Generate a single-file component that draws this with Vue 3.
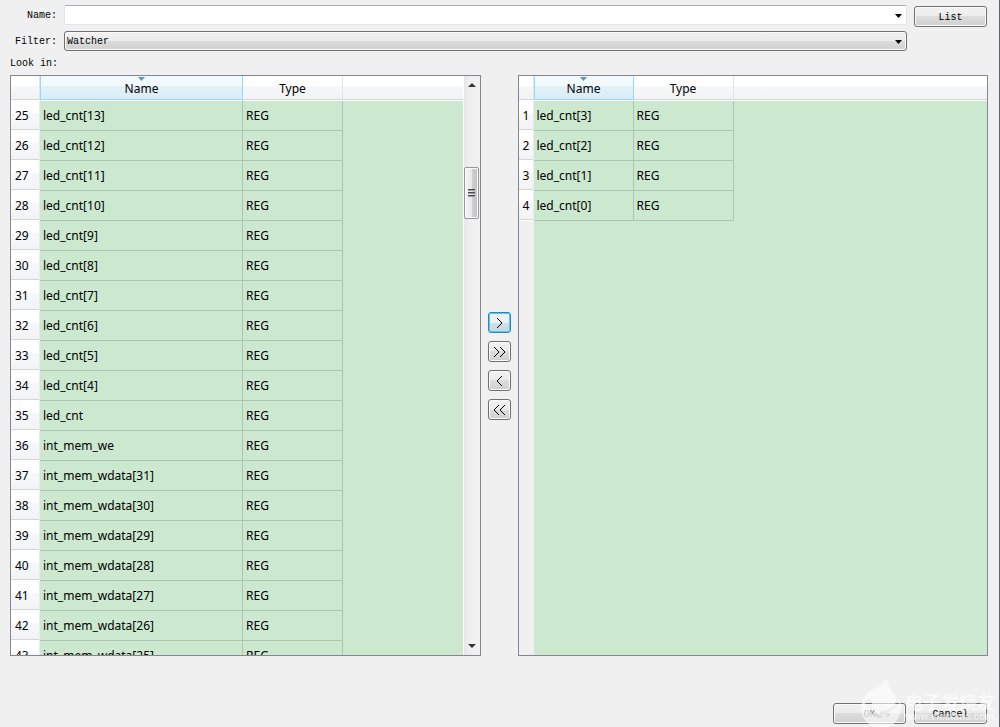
<script setup>
import { ref } from 'vue'

const name = ref('')
const filter = ref('Watcher')

const names = []
for (let i = 13; i >= 4; i--) names.push(`led_cnt[${i}]`)
names.push('led_cnt', 'int_mem_we')
for (let i = 31; i >= 25; i--) names.push(`int_mem_wdata[${i}]`)

const panes = [
  { id: 'available', first: 25, names, scroll: true },
  { id: 'selected', first: 1, names: [3, 2, 1, 0].map((i) => `led_cnt[${i}]`), scroll: false },
]

const moves = [
  { label: 'Add', d: 'M8 5l5 5l-5 5', active: true },
  { label: 'Add all', d: 'M5 5l5 5l-5 5M11 5l5 5l-5 5' },
  { label: 'Remove', d: 'M13 5l-5 5l5 5' },
  { label: 'Remove all', d: 'M10 5l-5 5l5 5M16 5l-5 5l5 5' },
]
</script>

<template>
  <main class="dialog">
    <form class="search" @submit.prevent>
      <label for="name">Name:</label>
      <div class="combo">
        <input id="name" v-model="name" type="text" />
        <svg class="arrow" viewBox="0 0 7 4"><path d="M0 0h7L3.5 4z" /></svg>
      </div>
      <button class="btn list" type="submit">List</button>
      <label for="filter">Filter:</label>
      <div class="combo">
        <select id="filter" v-model="filter">
          <option>Watcher</option>
        </select>
        <svg class="arrow" viewBox="0 0 7 4"><path d="M0 0h7L3.5 4z" /></svg>
      </div>
    </form>
    <p class="look">Look in:</p>

    <section class="lists">
      <template v-for="pane in panes" :key="pane.id">
        <div v-if="pane.id === 'selected'" class="moves">
          <button
            v-for="m in moves"
            :key="m.label"
            type="button"
            class="btn move"
            :class="{ active: m.active }"
            :aria-label="m.label"
          >
            <svg viewBox="0 0 21 19"><path :d="m.d" /></svg>
          </button>
        </div>
        <div class="pane" :class="pane.id">
          <div class="view">
            <table>
              <colgroup>
                <col class="c-num" />
                <col class="c-name" />
                <col class="c-type" />
                <col />
              </colgroup>
              <thead>
                <tr>
                  <td></td>
                  <th class="sorted" scope="col">
                    Name
                    <svg class="sort" viewBox="0 0 7 4"><path d="M0 0h7L3.5 4z" /></svg>
                  </th>
                  <th scope="col">Type</th>
                  <td></td>
                </tr>
              </thead>
              <tbody>
                <tr v-for="(n, i) in pane.names" :key="n">
                  <th scope="row">{{ pane.first + i }}</th>
                  <td>{{ n }}</td>
                  <td>REG</td>
                  <td class="rest"></td>
                </tr>
              </tbody>
            </table>
          </div>
          <div v-if="pane.scroll" class="scrollbar">
            <svg class="cap" viewBox="0 0 16 17"><path d="M4 11h8L8 7z" /></svg>
            <span class="before"></span>
            <div class="thumb"><i></i><i></i><i></i></div>
            <span class="after"></span>
            <svg class="cap" viewBox="0 0 16 17"><path d="M4 6h8L8 10z" /></svg>
          </div>
        </div>
      </template>
    </section>

    <footer class="actions">
      <button class="btn" type="button" disabled>OK</button>
      <button class="btn" type="button">Cancel</button>
    </footer>

    <div class="mark">
      <svg viewBox="0 0 44 50">
        <path
          fill-rule="evenodd"
          d="M27 1C29 8 32 12 34 16C38 20 38 25 35 29L27 34A3.500 3.500 0 1 0 28 36L38 30C41 27 40 23 38 19A20 20 0 1 1 8 17C13 11 25 10 27 1ZM13 27A3.500 3.500 0 1 0 11 29V34L19 41L31 39V36L20 38L13 32Z"
        />
      </svg>
      <div class="mark-text">
        <strong>电子发烧友</strong>
        <span>www.elecfans.com</span>
      </div>
    </div>
  </main>
</template>

<style>
body {
  margin: 0;
}
</style>

<style scoped>
.dialog {
  position: relative;
  box-sizing: border-box;
  display: flex;
  flex-direction: column;
  height: 100vh;
  padding: 5px 11px 3px 10px;
  border-right: 1px solid #59657a;
  background: #f0f0f0;
  color: #000;
  font: 10px/12px 'Liberation Mono', monospace;
  overflow: hidden;
}
.search {
  display: grid;
  grid-template-columns: 47px 1fr 73px;
  gap: 4px 7px;
  align-items: start;
  margin-right: 1px;
}
.search label {
  line-height: 22px;
  text-align: right;
}
.combo {
  position: relative;
  display: flex;
}
.combo input,
.combo select {
  box-sizing: border-box;
  width: 100%;
  height: 20px;
  margin: 0;
  padding: 2px 20px 0 2px;
  font: inherit;
  color: #000;
  appearance: none;
  outline: none;
}
.combo input {
  border: 1px solid #e2e3ea;
  border-top-color: #abadb3;
  border-radius: 2px;
  background: #fff;
}
.combo select,
.btn {
  border: 1px solid #707070;
  border-radius: 3px;
  background: linear-gradient(#f2f2f2 0, #ebebeb 50%, #dddddd 50%, #cfcfcf 100%);
  box-shadow: inset 0 0 0 1px #fafafa;
}
.arrow {
  position: absolute;
  right: 5px;
  top: 9px;
  width: 7px;
  height: 4px;
  pointer-events: none;
}
.btn {
  box-sizing: border-box;
  width: 73px;
  height: 21px;
  padding: 2px 0 0;
  font: inherit;
  color: #000;
}
.btn:disabled {
  color: #6f6f6f;
}
.list {
  margin-top: 1px;
}
.look {
  margin: 4px 0;
  line-height: 14px;
}
.lists {
  flex: 1;
  min-height: 0;
  display: flex;
}
.pane {
  flex: 1;
  min-width: 0;
  display: flex;
  border: 1px solid #828790;
  overflow: hidden;
}
.view {
  flex: 1;
  min-width: 0;
  overflow: hidden;
}
.available {
  --num: 29px;
  --name: 203px;
}
.selected {
  --num: 15px;
  --name: 100px;
}
.pane .view {
  background: linear-gradient(90deg, #f0f0f0 var(--num), #cce8cf var(--num));
}
table {
  width: 100%;
  table-layout: fixed;
  border-collapse: separate;
  border-spacing: 0;
  font: 12px/16px 'Noto Sans', sans-serif;
}
.c-num {
  width: var(--num);
}
.c-name {
  width: var(--name);
}
.c-type {
  width: 100px;
}
th,
td {
  box-sizing: border-box;
  padding: 0;
  font-weight: normal;
  white-space: nowrap;
}
thead th,
thead td {
  position: relative;
  height: 25px;
  border-bottom: 1px solid #fff;
  border-right: 1px solid #e2e4e6;
  background: linear-gradient(#fff 40%, #f5f7f9 40%, #f1f3f5);
  box-shadow: inset 0 -1px #d5d5d5;
}
thead th {
  padding-top: 2px;
}
thead td:last-child {
  border-right: 0;
}
thead .sorted {
  border-left: 1px solid #96d9f9;
  border-right-color: #96d9f9;
  background: linear-gradient(#f3fafd 40%, #e3f2f9 40%, #d8ecf6);
  box-shadow: inset 0 -1px #96d9f9;
}
.sort {
  position: absolute;
  left: 50%;
  top: 1px;
  width: 7px;
  height: 4px;
  margin-left: -4px;
  fill: #5a9ab8;
}
tbody th,
tbody td {
  height: 30px;
  overflow: hidden;
}
tbody th {
  padding-left: 4px;
  border-right: 1px solid #e9ecef;
  border-bottom: 1px solid #fff;
  background: linear-gradient(#fff 40%, #f7f8fa 40%, #f1f3f5);
  box-shadow: inset 0 -1px #d5d5d5;
  text-align: left;
}
tbody td {
  padding-left: 3px;
  border-right: 1px solid #acc5ae;
  border-bottom: 1px solid #acc5ae;
}
tbody .rest {
  border: 0;
}
.scrollbar {
  display: flex;
  flex-direction: column;
  width: 16px;
  border-left: 1px solid #fff;
  background: linear-gradient(90deg, #e6e6e6, #efefef 30%, #f1f1f1);
}
.cap {
  flex: none;
  width: 16px;
  height: 17px;
  fill: #333;
}
.before {
  flex: 74;
}
.after {
  flex: 419;
}
.thumb {
  box-sizing: border-box;
  display: flex;
  flex-direction: column;
  align-items: center;
  justify-content: center;
  gap: 1px;
  width: 15px;
  height: 52px;
  border: 1px solid #979797;
  border-radius: 2px;
  background: linear-gradient(90deg, #f5f5f5, #e9e9eb 50%, #d1d1d4 50%, #c0c0c4);
  box-shadow: inset 0 0 0 1px #fafafa;
}
.thumb i {
  width: 7px;
  height: 2px;
  background: linear-gradient(#4a4a4a 50%, #a0a0a0 50%);
}
.moves {
  display: flex;
  flex-direction: column;
  justify-content: center;
  gap: 8px;
  padding: 0 7px;
}
.move {
  width: 23px;
  padding: 0;
}
.move svg {
  display: block;
  width: 21px;
  height: 19px;
  fill: none;
  stroke: #000;
}
.move.active {
  border-color: #3c7fb1;
  background: linear-gradient(#eaf1f4 50%, #d5e0e5 50%, #c7d5dc);
  box-shadow: inset 0 0 0 1px #45d0fa;
}
.actions {
  display: flex;
  justify-content: flex-end;
  gap: 8px;
  margin: 47px 1px 0 0;
}
.mark {
  position: absolute;
  right: 4px;
  bottom: 0;
  display: flex;
  align-items: flex-end;
  gap: 2px;
  color: #fff;
  opacity: 0.6;
  pointer-events: none;
}
.mark svg {
  width: 44px;
  height: 50px;
  fill: #fff;
}
.mark-text {
  display: flex;
  flex-direction: column;
  padding-bottom: 4px;
}
.mark strong {
  font: bold 18px/20px 'Noto Sans CJK SC', sans-serif;
}
.mark span {
  font: bold 10px/12px 'Liberation Sans', sans-serif;
}
</style>
